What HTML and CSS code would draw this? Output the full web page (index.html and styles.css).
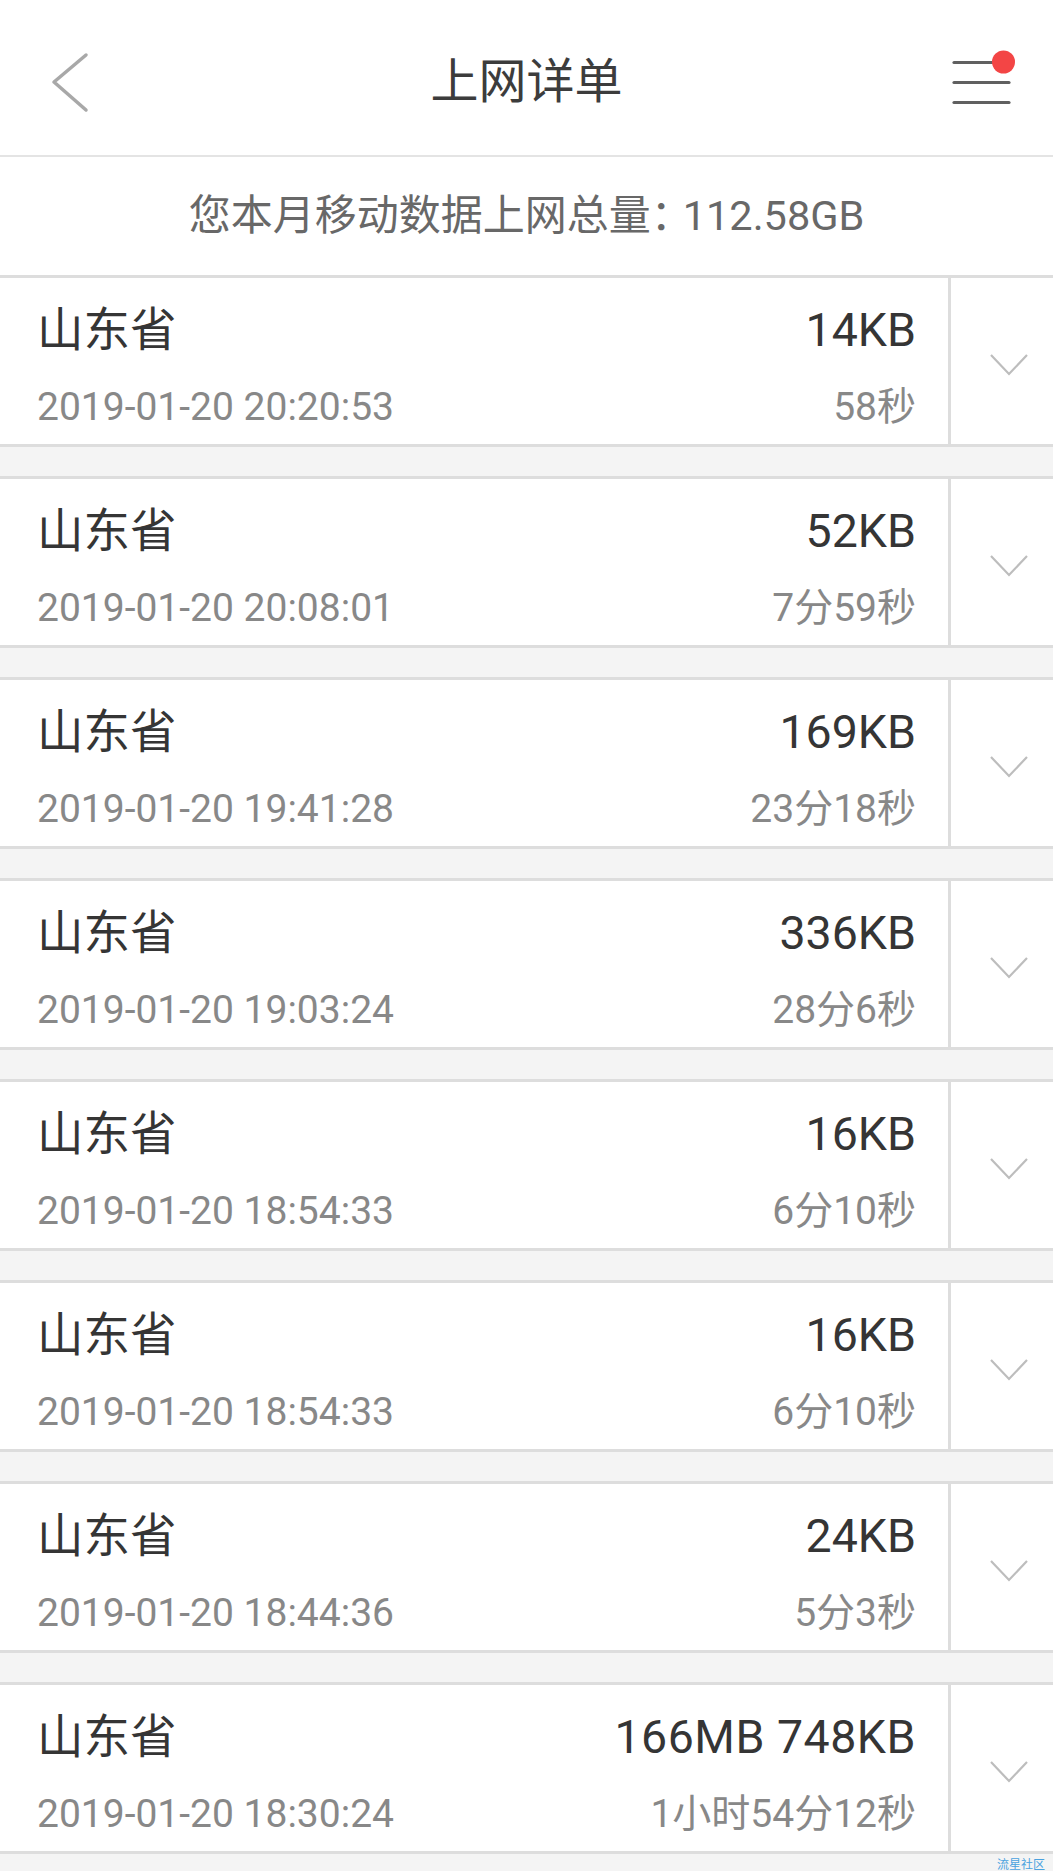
FILE: index.html
```html
<!DOCTYPE html>
<html lang="zh-CN">
<head>
<meta charset="utf-8">
<title>上网详单</title>
<link rel="stylesheet" href="styles.css">
</head>
<body>
<div class="page">
  <header class="topbar">
    <div class="topbar-left">
      <svg class="back-icon" width="40" height="65" viewBox="0 0 40 65">
        <polyline points="36,5 4,32 36,60" fill="none" stroke="#a8a8a8" stroke-width="3.5" stroke-linecap="round" stroke-linejoin="round"/>
      </svg>
    </div>
    <h1 class="title">上网详单</h1>
    <div class="topbar-right">
      <svg class="menu-icon" width="68" height="58" viewBox="0 0 68 58">
        <line x1="4" y1="13.5" x2="50" y2="13.5" stroke="#606060" stroke-width="3.2" stroke-linecap="round"/>
        <line x1="4" y1="33.5" x2="59" y2="33.5" stroke="#606060" stroke-width="3.2" stroke-linecap="round"/>
        <line x1="4" y1="53.5" x2="59" y2="53.5" stroke="#606060" stroke-width="3.2" stroke-linecap="round"/>
        <circle cx="53.5" cy="13" r="11.5" fill="#f34545"/>
      </svg>
    </div>
  </header>

  <div class="summary"><span class="summary-label">您本月移动数据上网总量：</span><span class="summary-value">112.58GB</span></div>

  <ul class="records">
    <li class="record">
      <div class="record-main">
        <div class="line line-top"><span class="place">山东省</span><span class="amount">14KB</span></div>
        <div class="line line-bottom"><span class="time">2019-01-20 20:20:53</span><span class="duration">58秒</span></div>
      </div>
      <div class="record-toggle"><svg width="40" height="24" viewBox="0 0 40 24"><polyline points="2,2 20,21 38,2" fill="none" stroke="#bdbdbd" stroke-width="2.2"/></svg></div>
    </li>
    <li class="record">
      <div class="record-main">
        <div class="line line-top"><span class="place">山东省</span><span class="amount">52KB</span></div>
        <div class="line line-bottom"><span class="time">2019-01-20 20:08:01</span><span class="duration">7分59秒</span></div>
      </div>
      <div class="record-toggle"><svg width="40" height="24" viewBox="0 0 40 24"><polyline points="2,2 20,21 38,2" fill="none" stroke="#bdbdbd" stroke-width="2.2"/></svg></div>
    </li>
    <li class="record">
      <div class="record-main">
        <div class="line line-top"><span class="place">山东省</span><span class="amount">169KB</span></div>
        <div class="line line-bottom"><span class="time">2019-01-20 19:41:28</span><span class="duration">23分18秒</span></div>
      </div>
      <div class="record-toggle"><svg width="40" height="24" viewBox="0 0 40 24"><polyline points="2,2 20,21 38,2" fill="none" stroke="#bdbdbd" stroke-width="2.2"/></svg></div>
    </li>
    <li class="record">
      <div class="record-main">
        <div class="line line-top"><span class="place">山东省</span><span class="amount">336KB</span></div>
        <div class="line line-bottom"><span class="time">2019-01-20 19:03:24</span><span class="duration">28分6秒</span></div>
      </div>
      <div class="record-toggle"><svg width="40" height="24" viewBox="0 0 40 24"><polyline points="2,2 20,21 38,2" fill="none" stroke="#bdbdbd" stroke-width="2.2"/></svg></div>
    </li>
    <li class="record">
      <div class="record-main">
        <div class="line line-top"><span class="place">山东省</span><span class="amount">16KB</span></div>
        <div class="line line-bottom"><span class="time">2019-01-20 18:54:33</span><span class="duration">6分10秒</span></div>
      </div>
      <div class="record-toggle"><svg width="40" height="24" viewBox="0 0 40 24"><polyline points="2,2 20,21 38,2" fill="none" stroke="#bdbdbd" stroke-width="2.2"/></svg></div>
    </li>
    <li class="record">
      <div class="record-main">
        <div class="line line-top"><span class="place">山东省</span><span class="amount">16KB</span></div>
        <div class="line line-bottom"><span class="time">2019-01-20 18:54:33</span><span class="duration">6分10秒</span></div>
      </div>
      <div class="record-toggle"><svg width="40" height="24" viewBox="0 0 40 24"><polyline points="2,2 20,21 38,2" fill="none" stroke="#bdbdbd" stroke-width="2.2"/></svg></div>
    </li>
    <li class="record">
      <div class="record-main">
        <div class="line line-top"><span class="place">山东省</span><span class="amount">24KB</span></div>
        <div class="line line-bottom"><span class="time">2019-01-20 18:44:36</span><span class="duration">5分3秒</span></div>
      </div>
      <div class="record-toggle"><svg width="40" height="24" viewBox="0 0 40 24"><polyline points="2,2 20,21 38,2" fill="none" stroke="#bdbdbd" stroke-width="2.2"/></svg></div>
    </li>
    <li class="record">
      <div class="record-main">
        <div class="line line-top"><span class="place">山东省</span><span class="amount amount-wide">166MB 748KB</span></div>
        <div class="line line-bottom"><span class="time">2019-01-20 18:30:24</span><span class="duration">1小时54分12秒</span></div>
      </div>
      <div class="record-toggle"><svg width="40" height="24" viewBox="0 0 40 24"><polyline points="2,2 20,21 38,2" fill="none" stroke="#bdbdbd" stroke-width="2.2"/></svg></div>
    </li>
  </ul>
  <div class="watermark">流星社区</div>
</div>
</body>
</html>
```

FILE: styles.css
```css
* {
  box-sizing: border-box;
}

html, body {
  margin: 0;
  padding: 0;
}

body {
  background: #f4f4f4;
  font-family: Roboto, "Noto Sans CJK SC", sans-serif;
}

.page {
  position: relative;
  width: 1053px;
  min-height: 1871px;
  background: #f4f4f4;
}

.topbar {
  display: grid;
  grid-template-columns: 1fr auto 1fr;
  align-items: center;
  height: 157px;
  background: #ffffff;
  border-bottom: 2px solid #e4e4e4;
}

.topbar-left {
  display: flex;
  align-items: center;
  padding-left: 50px;
  padding-top: 10px;
}

.topbar-right {
  display: flex;
  justify-content: flex-end;
  align-items: center;
  padding-right: 35px;
}

.back-icon,
.menu-icon {
  display: block;
}

.title {
  margin: 0;
  font-size: 48px;
  font-weight: 400;
  color: #3c3c3c;
  line-height: 60px;
  padding-top: 8px;
}

.summary {
  height: 118px;
  display: flex;
  align-items: baseline;
  justify-content: center;
  padding-top: 34px;
  background: #ffffff;
  color: #686868;
  line-height: 50px;
  white-space: nowrap;
}

.summary-label {
  font-size: 42px;
}

.summary-value {
  font-size: 41.5px;
  margin-left: -10px;
}

.records {
  list-style: none;
  margin: 0;
  padding: 0;
  display: flex;
  flex-direction: column;
  gap: 29px;
}

.record {
  display: flex;
  height: 172px;
  background: #ffffff;
  border-top: 3px solid #dddddd;
  border-bottom: 3px solid #dddddd;
}

.record-main {
  flex: 1;
  display: flex;
  flex-direction: column;
  padding: 22px 32px 0 37px;
}

.line {
  display: flex;
  justify-content: space-between;
  align-items: baseline;
  white-space: nowrap;
}

.line-top {
  height: 60px;
  line-height: 60px;
  font-size: 46.5px;
  color: #353535;
}

.amount-wide {
  letter-spacing: 0.5px;
}

.line-bottom {
  margin-top: 22px;
  height: 50px;
  line-height: 50px;
  font-size: 39px;
  color: #888888;
}

.record-toggle {
  width: 105px;
  border-left: 3px solid #dddddd;
  display: flex;
  align-items: center;
  justify-content: center;
  padding-left: 13px;
  padding-top: 8px;
}

.record-toggle svg {
  display: block;
}

.watermark {
  position: absolute;
  right: 8px;
  bottom: 0;
  font-size: 12px;
  line-height: 14px;
  color: #4aa2df;
  font-family: "Noto Sans CJK SC", sans-serif;
}
```
